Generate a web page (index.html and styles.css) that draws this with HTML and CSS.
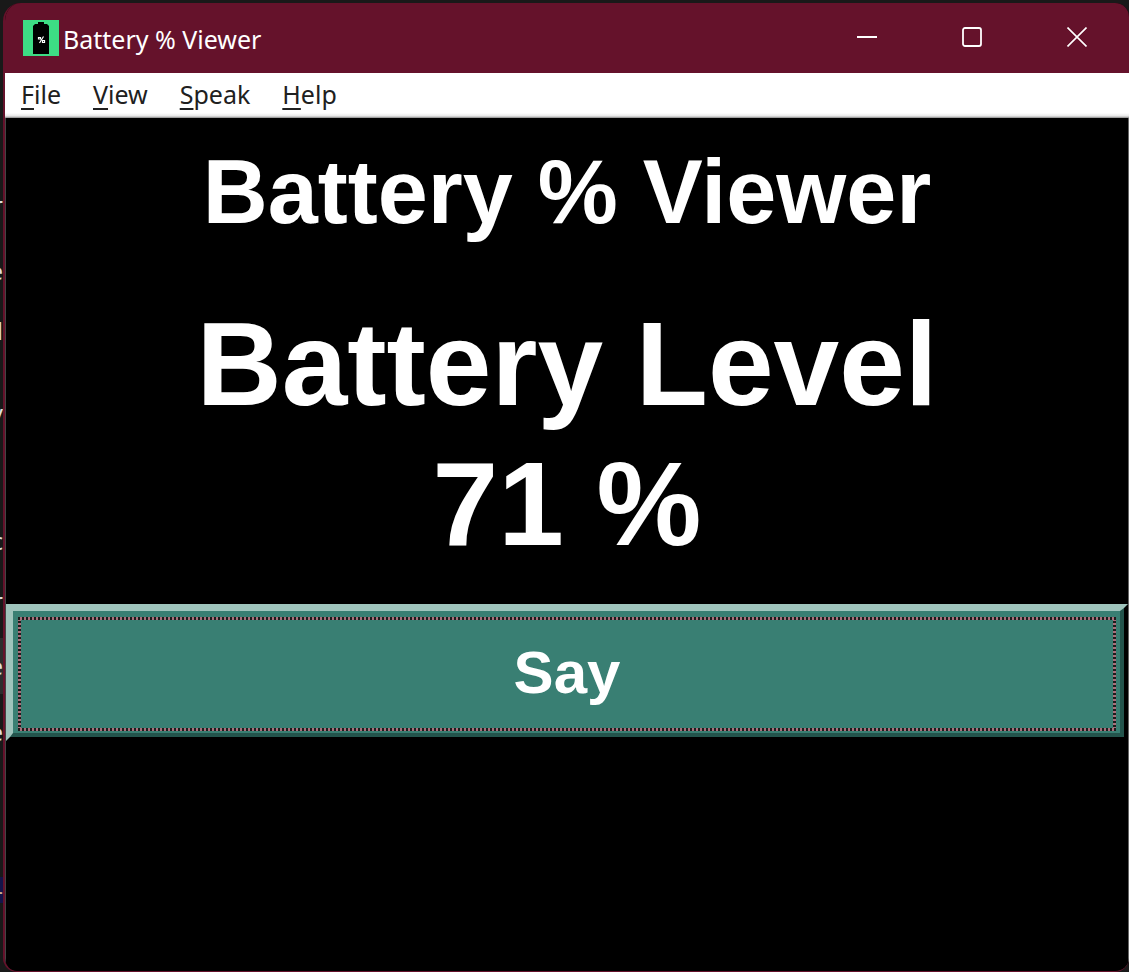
FILE: index.html
```html
<!DOCTYPE html>
<html lang="en">
<head>
<meta charset="utf-8">
<title>Battery % Viewer</title>
<link rel="stylesheet" href="styles.css">
</head>
<body>
<div class="desktop">
  <div class="backdrop" aria-hidden="true">
    <span>r</span><span>e</span><span>l</span><span>v</span><span></span><span>c</span><span>r</span><span class="lit">e</span><span>e</span><span></span><span class="blue">-</span>
  </div>
  <main class="window">
    <header class="titlebar">
      <svg class="app-icon" viewBox="0 0 36 36" aria-hidden="true">
        <path fill="#3ddc84" d="M0 0h36v36H0z"/>
        <path d="M15 2h6v2h3l2 2v28H10V6l2-2h3z"/>
        <path fill="none" stroke="#fff" stroke-width="1.2" d="M15.500 17.500h2v1.500h-2zM20.500 16.500l-4 6.500M19.500 20.500h2v2h-2z"/>
      </svg>
      <span class="title">Battery % Viewer</span>
      <div class="controls">
        <button aria-label="Minimize"><svg viewBox="0 0 20 20"><path d="M0 10h20" stroke-width="2"/></svg></button>
        <button aria-label="Maximize"><svg viewBox="0 0 20 20"><rect x="1" y="1" width="18" height="18" rx="2" stroke-width="1.800"/></svg></button>
        <button aria-label="Close"><svg viewBox="0 0 20 20"><path d="M.5.5l19 19M19.500.5l-19 19" stroke-width="1.600"/></svg></button>
      </div>
    </header>
    <nav class="menubar">
      <button><u>F</u>ile</button>
      <button><u>V</u>iew</button>
      <button><u>S</u>peak</button>
      <button><u>H</u>elp</button>
    </nav>
    <section class="content">
      <h1>Battery % Viewer</h1>
      <p class="level">Battery Level<br>71 %</p>
      <button class="say"><span class="face"><span class="focus">Say</span></span></button>
    </section>
  </main>
</div>
</body>
</html>
```
FILE: styles.css
```css
* { box-sizing: border-box; }
body { margin: 0; background: #191919; }
button { font: inherit; color: inherit; background: none; border: 0; padding: 0; margin: 0; }

.desktop { display: flex; min-height: 100vh; overflow: hidden; }
.backdrop {
  width: 3px; flex: none; overflow: hidden; color: #e0e0e0;
  font: 24px/32px "Noto Sans", sans-serif;
  display: grid; grid-template-columns: 3px;
  grid-template-rows: 66px 60px 82px 64px 64px 60px 53px 78px 64px 97px 26px;
  padding-top: 189px; align-content: start;
}
.backdrop span { display: flex; justify-content: flex-end; align-items: center; height: 32px; }
.backdrop .lit { background: #2d2d2d; height: 56px; }
.backdrop .blue { color: #d0b090; background: #14144a; height: 26px; }

.window {
  flex: 1; min-width: 0; margin-top: 3px; display: flex; flex-direction: column;
  border-left: 2px solid #65122b; border-bottom: 1px solid #65122b;
  border-radius: 18px 14px 14px 14px; overflow: hidden; background: #000;
}
.titlebar {
  height: 70px; flex: none; display: flex; align-items: center; gap: 4px;
  padding-left: 18px; background: #65122b; color: #fff;
}
.app-icon { width: 36px; height: 36px; }
.title { font: 25px/36px "Noto Sans", sans-serif; margin-top: 2px; }
.controls { display: flex; margin-left: auto; height: 68px; align-self: flex-start; }
.controls button { width: 105px; display: grid; place-items: center; }
.controls svg { width: 20px; height: 20px; fill: none; stroke: #fff; }

.menubar {
  height: 45px; flex: none; display: flex; gap: 32px; padding: 3px 16px 0;
  font: 25px/36px "Noto Sans", sans-serif; color: #202020;
  background: linear-gradient(#fff 40px, #e8e8e8 43px, #888);
}
.menubar button { display: block; height: 36px; }
.menubar u { text-underline-offset: 4px; text-decoration-thickness: 2px; }

.content {
  flex: 1; border-left: 1px solid #444; border-right: 1px solid #666;
  font-family: "Liberation Sans", Arial, sans-serif; font-weight: 700; color: #fff; text-align: center;
}
h1 { margin: 22px 0 0; font-size: 90px; line-height: 104px; }
.level { margin: 50px 0 0; font-size: 118px; line-height: 140px; }
.say {
  display: block; width: 100%; margin-top: 30px;
  border: 4px solid; border-color: #9fc4bc #000 #000 #9fc4bc;
  background: #397f73; font-size: 60px; line-height: 68px;
}
.face {
  display: block; padding: 6px 4px 2px 5px;
  border: solid; border-width: 3px 4px 4px 3px; border-color: #9fc4bc #23544c #23544c #9fc4bc;
}
.focus {
  display: block; padding: 22px 0 24px;
  background:
    repeating-linear-gradient(90deg, #1c1c1c 0 2px, #a8707c 2px 4px) top / 100% 3px no-repeat,
    repeating-linear-gradient(90deg, #1c1c1c 0 2px, #a8707c 2px 4px) bottom / 100% 3px no-repeat,
    repeating-linear-gradient(#1c1c1c 0 2px, #a8707c 2px 4px) left / 3px 100% no-repeat,
    repeating-linear-gradient(#1c1c1c 0 2px, #a8707c 2px 4px) right / 3px 100% no-repeat;
}
```
